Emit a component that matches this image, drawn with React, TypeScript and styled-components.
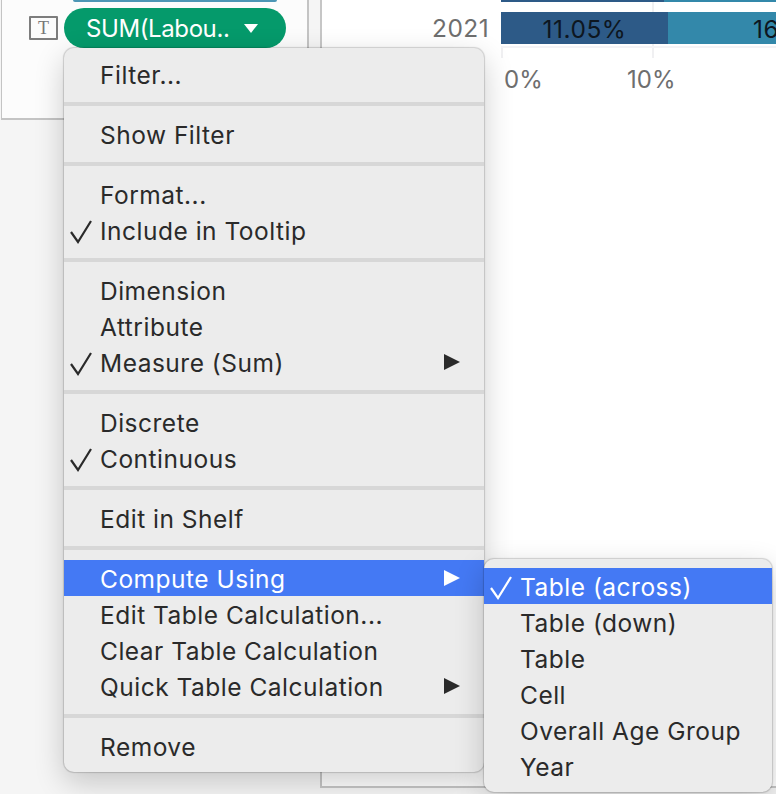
import React from 'react';
import styled, { createGlobalStyle } from 'styled-components';

const GlobalStyle = createGlobalStyle`
  html, body {
    margin: 0;
    padding: 0;
    background: #f5f5f5;
    font-family: Inter, "Liberation Sans", sans-serif;
  }
`;

const Frame = styled.div`
  position: relative;
  display: flex;
  align-items: flex-start;
  width: 776px;
  height: 794px;
  overflow: hidden;
  background: #f5f5f5;
`;

const Gutter = styled.div`
  width: 320px;
  flex: none;
`;

const MarksCard = styled.div`
  box-sizing: border-box;
  width: 308px;
  height: 120px;
  margin-left: 1px;
  background: #fcfcfc;
  border: solid #c4c4c4;
  border-width: 0 2px 2px 1px;
`;

const PreviousPill = styled.div`
  width: 204px;
  height: 2px;
  margin-left: 71px;
  background: #4d96b5;
  border-radius: 0 0 4px 4px;
`;

const PillRow = styled.div`
  display: flex;
  align-items: center;
  gap: 6px;
  margin: 6px 0 0 27px;
`;

const MarkType = styled.div`
  box-sizing: border-box;
  width: 29px;
  height: 24px;
  border: 2px solid #7d7d7d;
  border-radius: 1px;
  color: #777;
  font: 18px/20px "Liberation Serif", serif;
  text-align: center;
`;

const Pill = styled.div`
  box-sizing: border-box;
  display: flex;
  align-items: center;
  justify-content: space-between;
  width: 222px;
  height: 40px;
  padding: 0 28px 0 22px;
  border-radius: 20px;
  background: #059a6b;
  color: #fff;
  font-size: 24px;
  letter-spacing: -0.4px;
`;

const ChartPanel = styled.div`
  box-sizing: border-box;
  flex: 1;
  height: 788px;
  background: #fff;
  border: solid #c6c6c6;
  border-width: 0 0 2px 2px;
`;

const Plot = styled.div`
  margin-left: 179px;
  height: 48px;
  box-sizing: border-box;
  border-bottom: 2px solid #f3f3f6;
  background: linear-gradient(#f0f0f2, #f0f0f2) 151px 0 / 2px 100% no-repeat;
`;

const Bar = styled.div<{ $h: number }>`
  display: flex;
  height: ${(p) => p.$h}px;
  margin-bottom: 10px;
`;

const Segment = styled.div<{ $w: number; $bg: string }>`
  flex: none;
  width: ${(p) => p.$w}px;
  background: ${(p) => p.$bg};
  overflow: hidden;
  white-space: nowrap;
  color: #0d1620;
  font-size: 24.5px;
  letter-spacing: 0.5px;
  line-height: 34px;
`;

const DarkValue = styled.span`
  display: block;
  text-align: center;
`;

const TealValue = styled.span`
  display: block;
  padding-left: 85px;
`;

const Year = styled.div`
  position: absolute;
  top: 12px;
  right: 287px;
  color: #6e6e6e;
  font-size: 24.5px;
  letter-spacing: 0.4px;
  line-height: 32px;
`;

const Axis = styled.div`
  margin-left: 179px;
  height: 10px;
  background:
    linear-gradient(#f0f0f2, #f0f0f2) 0 0 / 2px 100% no-repeat,
    linear-gradient(#f0f0f2, #f0f0f2) 151px 0 / 2px 100% no-repeat;
`;

const AxisLabels = styled.div`
  display: flex;
  margin: 6px 0 0 182px;
  color: #6e6e6e;
  font-size: 24px;
  line-height: 32px;
`;

const AxisLabel = styled.span`
  width: 123px;
`;

const Menu = styled.div<{ $left: number; $top: number; $w: number }>`
  position: absolute;
  box-sizing: border-box;
  left: ${(p) => p.$left}px;
  top: ${(p) => p.$top}px;
  width: ${(p) => p.$w}px;
  padding: 8px 0;
  background: #ececec;
  border-radius: 10px;
  box-shadow: 0 0 1px 1px rgba(0, 0, 0, 0.16), 0 10px 30px rgba(0, 0, 0, 0.2);
`;

const SubMenu = styled(Menu)`
  padding-top: 9px;
`;

const Item = styled.div<{ $active?: boolean }>`
  position: relative;
  height: 36px;
  padding-left: 36px;
  background: ${(p) => (p.$active ? '#4479f4' : 'transparent')};
  color: ${(p) => (p.$active ? '#fff' : '#2a2a2a')};
  font-size: 24.5px;
  letter-spacing: 0.5px;
  line-height: 38px;
  white-space: nowrap;
`;

const Separator = styled.div`
  height: 4px;
  margin: 10px 0;
  background: #d7d7d7;
`;

const Check = styled.svg`
  position: absolute;
  left: 6px;
  top: 8px;
  width: 22px;
  height: 24px;
  fill: none;
  stroke: currentColor;
  stroke-width: 2.2;
`;

const Arrow = styled.svg`
  position: absolute;
  right: 23px;
  top: 9px;
  width: 18px;
  height: 18px;
  fill: currentColor;
`;

const Caret = styled.svg`
  width: 14px;
  height: 9px;
  fill: #fff;
`;

type Entry = { label: string; checked?: boolean; arrow?: boolean; active?: boolean };

const mainSections: Entry[][] = [
  [{ label: 'Filter...' }],
  [{ label: 'Show Filter' }],
  [{ label: 'Format...' }, { label: 'Include in Tooltip', checked: true }],
  [{ label: 'Dimension' }, { label: 'Attribute' }, { label: 'Measure (Sum)', checked: true, arrow: true }],
  [{ label: 'Discrete' }, { label: 'Continuous', checked: true }],
  [{ label: 'Edit in Shelf' }],
  [
    { label: 'Compute Using', arrow: true, active: true },
    { label: 'Edit Table Calculation...' },
    { label: 'Clear Table Calculation' },
    { label: 'Quick Table Calculation', arrow: true },
  ],
  [{ label: 'Remove' }],
];

const subItems: Entry[] = [
  { label: 'Table (across)', checked: true, active: true },
  { label: 'Table (down)' },
  { label: 'Table' },
  { label: 'Cell' },
  { label: 'Overall Age Group' },
  { label: 'Year' },
];

const MenuItem = ({ entry }: { entry: Entry }) => (
  <Item $active={entry.active}>
    {entry.checked && (
      <Check viewBox="0 0 22 24">
        <polyline points="1,12 8,22 21,1" />
      </Check>
    )}
    {entry.label}
    {entry.arrow && (
      <Arrow viewBox="0 0 18 18">
        <polygon points="1,1 17,9 1,17" />
      </Arrow>
    )}
  </Item>
);

export default function App() {
  return (
    <Frame>
      <GlobalStyle />
      <Gutter>
        <MarksCard>
          <PreviousPill />
          <PillRow>
            <MarkType>T</MarkType>
            <Pill>
              SUM(Labou..
              <Caret viewBox="0 0 14 9">
                <polygon points="0,0 14,0 7,9" />
              </Caret>
            </Pill>
          </PillRow>
        </MarksCard>
      </Gutter>

      <ChartPanel>
        <Plot>
          <Bar $h={2}>
            <Segment $w={163} $bg="#2d5a87" />
            <Segment $w={112} $bg="#3388aa" />
          </Bar>
          <Bar $h={32}>
            <Segment $w={167} $bg="#2d5a87">
              <DarkValue>11.05%</DarkValue>
            </Segment>
            <Segment $w={108} $bg="#3388aa">
              <TealValue>16</TealValue>
            </Segment>
          </Bar>
        </Plot>
        <Axis />
        <AxisLabels>
          <AxisLabel>0%</AxisLabel>
          <AxisLabel>10%</AxisLabel>
        </AxisLabels>
        <Year>2021</Year>
      </ChartPanel>

      <Menu $left={64} $top={48} $w={420}>
        {mainSections.map((section, i) => (
          <React.Fragment key={i}>
            {i > 0 && <Separator />}
            {section.map((entry) => (
              <MenuItem key={entry.label} entry={entry} />
            ))}
          </React.Fragment>
        ))}
      </Menu>

      <SubMenu $left={484} $top={559} $w={288}>
        {subItems.map((entry) => (
          <MenuItem key={entry.label} entry={entry} />
        ))}
      </SubMenu>
    </Frame>
  );
}
